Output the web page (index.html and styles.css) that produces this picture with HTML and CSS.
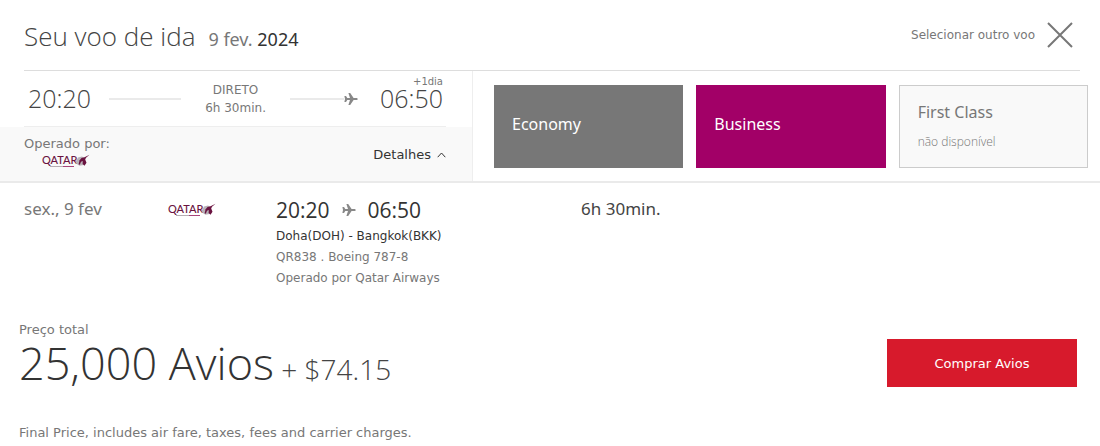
FILE: index.html
```html
<!DOCTYPE html>
<html lang="pt-BR">
<head>
  <meta charset="UTF-8">
  <meta name="viewport" content="width=device-width, initial-scale=1">
  <title>Seu voo de ida</title>
  <link rel="stylesheet" href="styles.css">
</head>
<body>
  <header class="flight-header">
    <h1>Seu voo de ida</h1>
    <p class="flight-date">9 fev. <span>2024</span></p>
    <button class="other-flight" type="button">
      Selecionar outro voo
      <svg class="close" viewBox="0 0 26 26" aria-hidden="true"><path d="M1 1l24 24M25 1L1 25"/></svg>
    </button>
  </header>

  <section class="flight">
    <div class="summary">
      <div class="times">
        <span class="time">20:20</span>
        <span class="line"></span>
        <p class="duration">DIRETO<br>6h 30min.</p>
        <span class="line line-end"></span>
        <svg class="plane" aria-hidden="true"><use href="#plane"/></svg>
        <span class="time arrival">06:50<small>+1dia</small></span>
      </div>
      <div class="operator">
        <div>
          <p>Operado por:</p>
          <svg class="logo" role="img" aria-label="Qatar"><use href="#qatar"/></svg>
        </div>
        <button class="details" type="button">
          Detalhes
          <svg class="chevron" viewBox="0 0 9 6" aria-hidden="true"><path d="M.7 5.2L4.500 1l3.800 4.200"/></svg>
        </button>
      </div>
    </div>
    <div class="cabins">
      <button class="cabin economy" type="button">Economy</button>
      <button class="cabin business" type="button">Business</button>
      <button class="cabin first" type="button" disabled>First Class<small>não disponível</small></button>
    </div>
  </section>

  <section class="segment">
    <p class="segment-date">sex., 9 fev</p>
    <svg class="logo" role="img" aria-label="Qatar"><use href="#qatar"/></svg>
    <div class="route">
      <p class="route-times">20:20 <svg class="plane" aria-hidden="true"><use href="#plane"/></svg> 06:50</p>
      <p class="cities">Doha(DOH) - Bangkok(BKK)</p>
      <p>QR838 . Boeing 787-8</p>
      <p>Operado por Qatar Airways</p>
    </div>
    <p class="segment-duration">6h 30min.</p>
  </section>

  <section class="price">
    <div>
      <p class="price-label">Preço total</p>
      <p class="total">25,000 Avios<span> + $74.15</span></p>
    </div>
    <button class="buy" type="button">Comprar Avios</button>
  </section>
  <p class="note">Final Price, includes air fare, taxes, fees and carrier charges.</p>

  <!-- shared symbols -->
  <svg class="symbols" aria-hidden="true">
    <symbol id="plane" viewBox="0 0 14 14">
      <path d="M13.8 7c0 .7-.8 1.100-1.800 1.100H9.600L6.200 13H4.400L6 8.100H3.300L2 10H.4L1 7 .4 4H2l1.300 1.900H6L4.400 1h1.800l3.400 4.900H12c1 0 1.800.4 1.800 1.100z"/>
    </symbol>
    <symbol id="qatar" viewBox="0 0 48 14">
      <text x="0" y="10" class="logo-text">QATAR</text>
      <path d="M8 12.500h13" stroke="#b5adb2" stroke-width="1"/>
      <path d="M21 12.500h11" stroke="#a8447a" stroke-width="1"/>
      <path d="M33.500 8L36 3.500l4-1 2.500 1.500-1 7-4 .8-3-2z" fill="#b9b3b8"/>
      <path d="M37 7l2.500-3 3-.8L47.500.8 44 3.800l-.8 1.700 1.300 3.200-2 3-1.900-1.700.2-3-1.800.8-1.200 3-1.200-.6.8-3z" fill="#6a1340"/>
    </symbol>
  </svg>
</body>
</html>
```
FILE: styles.css
```css
* {
  box-sizing: border-box;
}
body {
  margin: 0;
  background-color: #fff;
  color: #777;
  font-family: "DejaVu Sans", Verdana, sans-serif;
  font-size: 12px;
  line-height: 21px;
}
h1, p {
  margin: 0;
}
button {
  border: 0;
  padding: 0;
  background: none;
  color: inherit;
  font: inherit;
  cursor: pointer;
}
.symbols {
  display: none;
}
.logo {
  display: block;
  width: 48px;
  height: 14px;
}
.logo-text {
  font-family: Lato, sans-serif;
  font-size: 11px;
  font-weight: 500;
  fill: #6a1340;
}
.plane {
  width: 14px;
  height: 14px;
  fill: #888;
}

/* header */
.flight-header {
  display: flex;
  align-items: baseline;
  margin: 0 20px 0 24px;
  padding-top: 16px;
  height: 71px;
  border-bottom: 1px solid #ddd;
}
h1 {
  font-family: "Open Sans", sans-serif;
  font-size: 26px;
  font-weight: 300;
  line-height: 40px;
  color: #444;
}
.flight-date {
  margin-left: 13px;
  font-family: "Noto Sans", sans-serif;
  font-size: 18px;
}
.flight-date span {
  color: #333;
}
.other-flight {
  display: flex;
  align-self: flex-start;
  align-items: center;
  gap: 12px;
  margin: 6px 7px 0 auto;
}
.close {
  width: 26px;
  height: 26px;
  fill: none;
  stroke: #777;
  stroke-width: 2;
}

/* selected flight */
.flight {
  display: flex;
  border-bottom: 2px solid #eaeaea;
}
.summary {
  flex: 0 0 43%;
  border-right: 1px solid #eee;
}
.times {
  display: flex;
  align-items: center;
  margin: 0 26px 0 24px;
  padding: 0 3px 0 4px;
  height: 56px;
  border-bottom: 1px solid #eee;
}
.time {
  position: relative;
  font-family: "Open Sans", sans-serif;
  font-size: 25px;
  font-weight: 300;
  color: #444;
}
.line {
  flex: 1;
  margin: 0 24px 0 18px;
  height: 2px;
  background-color: #eaeaea;
}
.line-end {
  flex: 0 0 54px;
  margin: 0;
}
.duration {
  margin-right: 24px;
  text-align: center;
  line-height: 18px;
}
.arrival {
  margin-left: 22px;
}
.arrival small {
  position: absolute;
  right: 0;
  top: -12px;
  font-family: "DejaVu Sans", Verdana, sans-serif;
  font-size: 10px;
  font-weight: 400;
  line-height: 12px;
  color: #777;
}
.operator {
  display: flex;
  justify-content: space-between;
  align-items: center;
  padding: 6px 26px 13px 24px;
  background-color: #f9f9f9;
  font-size: 13px;
}
.operator .logo {
  margin-left: 18px;
}
.details {
  display: flex;
  align-items: center;
  gap: 6px;
  margin-top: 8px;
  color: #333;
}
.chevron {
  width: 9px;
  height: 6px;
  fill: none;
  stroke: #333;
}
.cabins {
  flex: 1;
  display: grid;
  grid-template-columns: repeat(3, 1fr);
  gap: 13px;
  padding: 14px 12px 13px 21px;
}
.cabin {
  padding: 0 18px;
  text-align: left;
  font-family: "Noto Sans", sans-serif;
  font-size: 16px;
  color: #fff;
}
.economy, .business {
  padding-bottom: 4px;
}
.economy {
  background-color: #777;
}
.business {
  background-color: #a20067;
}
.first {
  border: 1px solid #ccc;
  background-color: #f9f9f9;
  color: #777;
}
.first small {
  display: block;
  margin-top: 8px;
  font-family: "Open Sans", sans-serif;
  font-size: 12px;
  font-weight: 300;
}

/* segment details */
.segment {
  display: grid;
  grid-template-columns: 144px 108px 29% 1fr;
  align-items: start;
  padding: 15px 24px 0;
}
.segment .logo {
  margin-top: 5px;
}
.segment-date, .segment-duration {
  font-family: "Noto Sans", sans-serif;
  font-size: 17px;
}
.segment-duration {
  color: #444;
}
.route-times {
  display: flex;
  align-items: center;
  gap: 12px;
  height: 24px;
  margin-bottom: 4px;
  font-family: "Open Sans", sans-serif;
  font-size: 21px;
  color: #333;
}
.cities {
  color: #333;
}

/* price */
.price {
  display: flex;
  justify-content: space-between;
  align-items: flex-start;
  padding: 32px 23px 0 19px;
  font-size: 13px;
}
.price-label {
  line-height: 18px;
}
.total {
  font-family: "Open Sans", sans-serif;
  font-size: 45px;
  font-weight: 300;
  line-height: 48px;
  color: #333;
}
.total span {
  font-size: 28px;
  color: #444;
}
.buy {
  width: 190px;
  height: 48px;
  margin-top: 18px;
  background-color: #d71a2c;
  color: #fff;
}
.note {
  padding: 29px 19px 5px;
  font-size: 13px;
}
```
